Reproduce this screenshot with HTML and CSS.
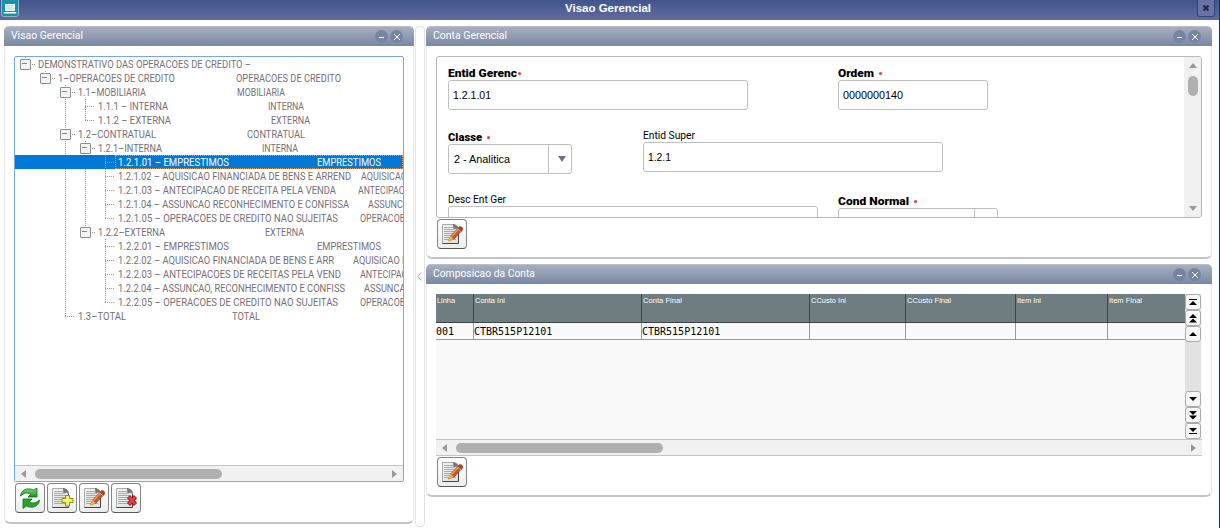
FILE: index.html
```html
<!DOCTYPE html>
<html lang="pt">
<head>
  <meta charset="UTF-8">
  <title>Visao Gerencial</title>
  <link rel="stylesheet" href="styles.css">
</head>
<body>
  <svg class="defs">
    <defs>
      <linearGradient id="verde" x1="0" y1="0" x2="0" y2="1">
        <stop offset="0" stop-color="#7fdc7c"/>
        <stop offset="1" stop-color="#16941c"/>
      </linearGradient>
      <linearGradient id="papel" x1="0" y1="0" x2="1" y2="1">
        <stop offset="0" stop-color="#f4f4f4"/>
        <stop offset="1" stop-color="#dedede"/>
      </linearGradient>
      <symbol id="folha" viewBox="0 0 30 30">
        <path d="M5.5 5.500h11l5 5v14h-16z" fill="url(#papel)" stroke="#aaa"/>
        <path d="M21.500 11v13.500h-16" fill="none" stroke="#444"/>
        <path d="M16 5c3 0 6 2.500 6 6l-3-1.500-2.500 1.500z" fill="#777"/>
        <path d="M7 8.500h9M7 10.500h9M7 12.500h12M7 14.500h12M7 16.500h12M7 18.500h12M7 20.500h12" stroke="#a9a9a9"/>
      </symbol>
      <symbol id="editar" viewBox="0 0 30 30">
        <use href="#folha"/>
        <path d="M11.500 22l2.200-5L21 9l3.500 3-7.500 8z" fill="#c9572b" stroke="#8a3a18" stroke-width=".6"/>
        <path d="M14.500 17.500l7.500-8" stroke="#ec9a6c" stroke-width="1.200"/>
        <path d="M11 22.500l2.400-5.500 3.300 2.900z" fill="#eeb44c"/>
        <path d="M20.500 9.500l1.500-2q2-1 3.500 1t-.2 3.200l-1.300 1.300z" fill="#a4452a"/>
        <path d="M20.500 9.500l3.600 3.400" stroke="#e0b060"/>
      </symbol>
    </defs>
  </svg>

  <div class="janela">
    <header class="titulo">
      <svg class="logo" width="19" height="17" viewBox="0 0 19 17">
        <rect x="1.500" y="-2" width="17" height="18.500" rx="2" fill="#1591ac" stroke="#8cb5c8"/>
        <rect x="5.500" y="4.500" width="9" height="6" fill="#c9e9f1" stroke="#fff"/>
        <path d="M4 12h12l.5 1.500h-13z" fill="#fff"/>
      </svg>
      <span data-w="86">Visao Gerencial</span>
      <button class="fechar"><svg width="8" height="8" viewBox="0 0 8 8"><path d="M1.500 1.500l5 5M6.500 1.500l-5 5" stroke="#262b45" stroke-width="2.200"/></svg></button>
    </header>

    <main class="conteudo">
      <section class="painel arvore-painel">
        <h2><span data-w="72">Visao Gerencial</span><i class="mini"></i><i class="mini x"></i></h2>
        <div class="lista">
          <div id="arvore"></div>
          <div class="rolagem-h">
            <i class="seta esq"></i><i class="barra"></i><i class="seta dir"></i>
          </div>
        </div>
        <div class="botoes">
          <button><svg viewBox="0 0 30 30">
            <path d="M5.500 13C6 7 12 4 18.500 7l3.500-2v9h-9l3-3c-4-1.800-7-1-10.500 2z" fill="url(#verde)" stroke="#176d20" stroke-width=".8"/>
            <path d="M24.500 17c-.5 6-6.500 9-13 6l-3.500 2.500V16h9l-3 3c4 1.800 7 1 10.500-2z" fill="#27a52b" stroke="#176d20" stroke-width=".8"/>
          </svg></button>
          <button><svg viewBox="0 0 30 30"><use href="#folha"/><path d="M18.500 12.500h4v3h3.500v4h-3.500v3.500h-4v-3.500H15v-4h3.500z" fill="#eef56a" stroke="#858c20"/></svg></button>
          <button><svg viewBox="0 0 30 30"><use href="#editar"/></svg></button>
          <button><svg viewBox="0 0 30 30"><use href="#folha"/><path d="M17.500 13.500l7 8M24.500 13.500l-7 8" stroke="#941c1c" stroke-width="4.200"/><path d="M18 14l6 7M24 14l-6 7" stroke="#ef3b3b" stroke-width="2.600"/></svg></button>
        </div>
      </section>

      <div class="divisor"><svg width="5" height="9" viewBox="0 0 5 9"><path d="M4.500 .5l-4 4 4 4" fill="none" stroke="#aaa"/></svg></div>

      <div class="direita">
        <section class="painel">
          <h2><span data-w="74">Conta Gerencial</span><i class="mini"></i><i class="mini x"></i></h2>
          <div class="form">
            <div class="campos">
              <div class="linha">
                <div class="campo w300">
                  <label><b data-w="69">Entid Gerenc</b><em></em></label>
                  <div class="entrada"><span data-w="38">1.2.1.01</span></div>
                </div>
                <div class="campo w150 ordem">
                  <label><b data-w="36">Ordem</b><em class="longe"></em></label>
                  <div class="entrada"><span data-w="60">0000000140</span></div>
                </div>
              </div>
              <div class="linha">
                <div class="campo w124 baixo">
                  <label><b data-w="34">Classe</b><em class="longe"></em></label>
                  <div class="entrada selecao"><span data-w="56">2 - Analitica</span><i></i></div>
                </div>
                <div class="campo w300 super">
                  <label><span data-w="52">Entid Super</span></label>
                  <div class="entrada"><span data-w="23">1.2.1</span></div>
                </div>
              </div>
              <div class="linha linha3">
                <div class="campo w370">
                  <label><span data-w="58">Desc Ent Ger</span></label>
                  <div class="entrada"></div>
                </div>
                <div class="campo w160 cond baixo">
                  <label><b data-w="71">Cond Normal</b><em class="longe"></em></label>
                  <div class="entrada selecao"><i></i></div>
                </div>
              </div>
            </div>
            <div class="rolagem-v"><i class="seta cima"></i><i class="barra"></i><i class="seta fundo"></i></div>
          </div>
          <div class="botoes">
            <button><svg viewBox="0 0 30 30"><use href="#editar"/></svg></button>
          </div>
        </section>

        <section class="painel">
          <h2><span data-w="102">Composicao da Conta</span><i class="mini"></i><i class="mini x"></i></h2>
          <div class="grade">
            <div class="grade-corpo">
              <div class="tabela">
                <div class="cab"><span data-w="18">Linha</span></div>
                <div class="cab"><span data-w="30">Conta Ini</span></div>
                <div class="cab"><span data-w="39">Conta Final</span></div>
                <div class="cab"><span data-w="35">CCusto Ini</span></div>
                <div class="cab"><span data-w="44">CCusto Final</span></div>
                <div class="cab"><span data-w="24">Item Ini</span></div>
                <div class="cab"><span data-w="33">Item Final</span></div>
                <div class="cel">001</div>
                <div class="cel">CTBR515P12101</div>
                <div class="cel">CTBR515P12101</div>
                <div class="cel"></div>
                <div class="cel"></div>
                <div class="cel"></div>
                <div class="cel"></div>
              </div>
              <div class="nav">
                <button><svg viewBox="0 0 16 16"><path d="M4 5.500h8" stroke="#000"/><path d="M4 11l4-4 4 4z"/></svg></button>
                <button><svg viewBox="0 0 16 16"><path d="M4 8l4-4 4 4zM4 12.500l4-4 4 4z"/></svg></button>
                <button><svg viewBox="0 0 16 16"><path d="M4 10l4-4 4 4z"/></svg></button>
                <span></span>
                <button><svg viewBox="0 0 16 16"><path d="M4 6h8l-4 4z"/></svg></button>
                <button><svg viewBox="0 0 16 16"><path d="M4 4h8l-4 4zM4 8.500h8l-4 4z"/></svg></button>
                <button><svg viewBox="0 0 16 16"><path d="M4 5h8l-4 4z"/><path d="M4 10.500h8" stroke="#000"/></svg></button>
              </div>
            </div>
            <div class="rolagem-h">
              <i class="seta esq"></i><i class="barra"></i><i class="seta dir"></i>
            </div>
          </div>
          <div class="botoes">
            <button><svg viewBox="0 0 30 30"><use href="#editar"/></svg></button>
          </div>
        </section>
      </div>
    </main>
  </div>

  <script src="script.js"></script>
</body>
</html>
```
FILE: styles.css
```css
* {
  box-sizing: border-box;
}

body {
  margin: 0;
  width: 1220px;
  height: 528px;
  overflow: hidden;
  background: #fff;
  font-family: Roboto, "Liberation Sans", sans-serif;
  font-size: 11px;
  color: #000;
}

.defs {
  position: absolute;
  width: 0;
  height: 0;
}

svg {
  display: block;
}

button {
  padding: 0;
  font: inherit;
}

[data-w] {
  display: inline-block;
  white-space: pre;
  transform-origin: 0 50%;
}

.janela {
  height: 528px;
  border-right: 1px solid #0b3a5b;
}

/* barra de titulo */
.titulo {
  display: flex;
  justify-content: space-between;
  height: 20px;
  background: linear-gradient(#41558d, #626b9f);
  color: #fff;
  font: bold 11px/16px "Liberation Sans", sans-serif;
}

.fechar {
  width: 18px;
  height: 17px;
  margin-right: 4px;
  display: flex;
  align-items: center;
  justify-content: center;
  background: #6873a6;
  border: 1px solid #2f4280;
  border-top: 0;
  border-radius: 0 0 3px 3px;
}

.conteudo {
  display: flex;
  height: 508px;
  padding: 6px 0 0 4px;
}

/* paineis */
.painel {
  width: 786px;
  height: 233px;
  background: #fff;
  border: 1px solid #e4e4e4;
  border-top: 0;
  border-bottom: 2px solid #c4c4c4;
  border-radius: 5px 5px 6px 6px;
  padding: 0 9px;
}

.painel h2 {
  display: flex;
  align-items: center;
  height: 20px;
  margin: 0 -10px 10px;
  padding: 0 10px 2px 7px;
  background: linear-gradient(#a7afbf, #7887a3);
  border-top: 1px solid #b9bec9;
  border-radius: 5px 5px 0 0;
  color: #fff;
  font-size: 11px;
  font-weight: normal;
}

.painel h2 .mini:first-of-type {
  margin-left: auto;
}

.mini {
  display: flex;
  align-items: center;
  justify-content: center;
  width: 13px;
  height: 13px;
  margin: 2px 1px 0;
  border-radius: 50%;
  background: #7585a1;
}

.mini::before {
  content: "";
  width: 5px;
  height: 1px;
  margin-top: 2px;
  background: #fff;
}

.mini.x::before {
  width: 6px;
  height: 6px;
  margin: 0;
  background: linear-gradient(45deg, transparent 43%, #fff 43% 57%, transparent 57%),
    linear-gradient(-45deg, transparent 43%, #fff 43% 57%, transparent 57%);
}

.arvore-painel {
  width: 410px;
  height: 498px;
}

.lista {
  width: 390px;
  height: 426px;
  border: 1px solid #77a5ef;
  border-radius: 2px;
  overflow: hidden;
  display: flex;
  flex-direction: column;
}

#arvore {
  flex: 1;
  overflow: hidden;
}

.no {
  display: flex;
  height: 14px;
  line-height: 14px;
  color: #766f77;
  white-space: pre;
}

.no .guia {
  flex: none;
  width: 20px;
  height: 14px;
}

.guia.v {
  background: repeating-linear-gradient(#999 0 1px, transparent 1px 2px) 10px 0 / 1px 14px no-repeat;
}

.guia.t {
  background: repeating-linear-gradient(#999 0 1px, transparent 1px 2px) 10px 0 / 1px 14px no-repeat,
    repeating-linear-gradient(90deg, #999 0 1px, transparent 1px 2px) 10px 7px / 9px 1px no-repeat;
}

.guia.l {
  background: repeating-linear-gradient(#999 0 1px, transparent 1px 2px) 10px 0 / 1px 8px no-repeat,
    repeating-linear-gradient(90deg, #999 0 1px, transparent 1px 2px) 10px 7px / 9px 1px no-repeat;
}

.guia.b,
.guia.u {
  padding: 2px 0 0 5px;
  background: repeating-linear-gradient(90deg, #999 0 1px, transparent 1px 2px) 15px 7px / 5px 1px no-repeat,
    repeating-linear-gradient(#999 0 1px, transparent 1px 2px) 10px 0 / 1px 14px no-repeat;
}

.guia.u {
  background-size: 5px 1px, 1px 4px;
}

.guia.b::before,
.guia.u::before {
  content: "";
  display: block;
  width: 9px;
  height: 9px;
  border: 1px solid #8e8e8e;
  border-radius: 1px;
  background: linear-gradient(#888, #888) 1px 3px / 5px 1px no-repeat #f3f3f3;
}

.no .texto {
  display: flex;
  flex: 1;
  padding: 1px 0 0 3px;
  min-width: 0;
  overflow: hidden;
}

.no .nome,
.no .desc {
  flex: none;
}

.no.ativo {
  background: #0078d7;
  color: #fff;
}

.no.ativo .guia.v {
  background: none;
}

.no.ativo .texto {
  outline: 1px dotted #e39a56;
  outline-offset: -1px;
}

/* rolagem */
.rolagem-h {
  display: flex;
  align-items: center;
  height: 17px;
  flex: none;
  padding: 0 6px;
  background: #f1f1f1;
  border-top: 1px solid #c4c4c4;
}

.lista .rolagem-h {
  height: 16px;
}

.rolagem-h .barra {
  width: 187px;
  height: 10px;
  margin-left: 9px;
  border-radius: 5px;
  background: #b0b0b0;
}

.seta {
  width: 0;
  height: 0;
  border: 4px solid transparent;
}

.seta.esq {
  border-right: 5px solid #999;
  border-left: 0;
}

.seta.dir {
  margin-left: auto;
  border-left: 5px solid #999;
  border-right: 0;
}

.seta.cima {
  border-bottom: 5px solid #999;
  border-top: 0;
}

.seta.fundo {
  margin-top: auto;
  border-top: 5px solid #999;
  border-bottom: 0;
}

.botoes {
  display: flex;
  gap: 2px;
  padding: 1px 0 0 1px;
}

.botoes button {
  width: 30px;
  height: 30px;
  border: 1px solid #858585;
  border-bottom-color: #555;
  border-radius: 4px;
  background: linear-gradient(#fff, #eceeee);
}

.botoes svg {
  width: 30px;
  height: 30px;
  margin: -1px;
}

.divisor {
  display: flex;
  align-items: center;
  width: 10px;
  height: 501px;
  margin: 0 1px;
  padding-left: 1px;
  border: 1px solid #e2e2e2;
  border-radius: 4px;
}

.direita {
  display: flex;
  flex-direction: column;
  gap: 5px;
}

/* formulario */
.form {
  display: flex;
  width: 766px;
  height: 162px;
  border: 1px solid #b8b8b8;
  border-radius: 3px;
  overflow: hidden;
}

.campos {
  flex: 1;
  padding: 9px 0 0 11px;
}

.linha {
  display: flex;
  height: 62px;
}

.linha3 {
  padding-top: 2px;
}

.campo label {
  display: flex;
  align-items: center;
  height: 14px;
}

.campo.baixo {
  padding-top: 2px;
}

.campo b {
  font-size: 11.5px;
  font-weight: 900;
}

.campo em {
  width: 3px;
  height: 3px;
  margin: 1px 0 0 1px;
  border-radius: 50%;
  background: #f33;
}

.campo em.longe {
  margin-left: 5px;
}

.entrada {
  display: flex;
  align-items: center;
  height: 30px;
  padding-left: 4px;
  border: 1px solid #bfbfbf;
  border-radius: 3px;
  font: 11px "Liberation Sans", sans-serif;
}

.selecao {
  padding-left: 5px;
}

.selecao i {
  display: flex;
  align-items: center;
  width: 23px;
  height: 28px;
  margin-left: auto;
  padding-left: 9px;
  border-left: 1px solid #bfbfbf;
}

.selecao i::after {
  content: "";
  border: 4px solid transparent;
  border-top: 6px solid #6b7184;
  border-bottom: 0;
}

.w124 { width: 124px; }
.w150 { width: 150px; }
.w160 { width: 160px; }
.w300 { width: 300px; }
.w370 { width: 370px; }

.ordem { margin-left: 90px; }
.super { margin-left: 71px; }
.cond { margin-left: 20px; }

.rolagem-v {
  display: flex;
  flex-direction: column;
  align-items: center;
  width: 17px;
  padding: 6px 0;
  background: #f1f1f1;
}

.rolagem-v .barra {
  width: 10px;
  height: 20px;
  margin-top: 8px;
  border-radius: 5px;
  background: #b0b0b0;
}

/* grade */
.grade {
  width: 766px;
  height: 162px;
  background: #f9f9f9;
}

.grade-corpo {
  display: flex;
  height: 145px;
}

.tabela {
  display: grid;
  grid-template-columns: 38px 168px 168px 96px 110px 92px 77px;
  grid-template-rows: 29px 17px;
}

.cab {
  padding: 2px 0 0 1px;
  background: #6e7d80;
  border-right: 1px solid #3e4648;
  border-bottom: 1px solid #3e4648;
  color: #fff;
  font: 8px/9px "Liberation Sans", sans-serif;
}

.cel {
  height: 17px;
  border-right: 1px solid #999;
  border-bottom: 1px solid #999;
  font: 10px/18px "DejaVu Sans Mono", monospace;
}

.cab:nth-child(7),
.cel:last-child {
  border-right: 0;
}

.nav {
  display: flex;
  flex-direction: column;
  width: 16px;
  margin-right: 1px;
  background: #e2e2e2;
}

.nav span {
  flex: 1;
}

.nav button {
  width: 16px;
  height: 16px;
  border: 1px solid #aaa;
  border-radius: 3px;
  background: #f8f8f8;
}

.nav svg {
  width: 16px;
  height: 16px;
  margin: -1px;
}

.grade .rolagem-h {
  border-bottom: 1px solid #c4c4c4;
}

.grade .rolagem-h .barra {
  width: 207px;
}
```
FILE: script.js
```js
// guias: v = vertical, t = ramo, l = ultimo ramo, b = no aberto, u = ultimo no aberto, . = vazio
// [guias, nome, largura, descricao, inicio, largura]
const nos = [
  ["u", "DEMONSTRATIVO DAS OPERACOES DE CREDITO –", 213],
  [".u", "1–OPERACOES DE CREDITO", 117, "OPERACOES DE CREDITO", 236, 105],
  ["..b", "1.1–MOBILIARIA", 68, "MOBILIARIA", 237, 48],
  ["..vt", "1.1.1 – INTERNA", 70, "INTERNA", 268, 36],
  ["..vl", "1.1.2 – EXTERNA", 73, "EXTERNA", 271, 39],
  ["..b", "1.2–CONTRATUAL", 78, "CONTRATUAL", 247, 58],
  ["..vb", "1.2.1–INTERNA", 64, "INTERNA", 262, 36],
  ["..vvt", "1.2.1.01 – EMPRESTIMOS", 111, "EMPRESTIMOS", 317, 64],
  ["..vvt", "1.2.1.02 – AQUISICAO FINANCIADA DE BENS E ARREND", 233, "AQUISICAO", 361, 46],
  ["..vvt", "1.2.1.03 – ANTECIPACAO DE RECEITA PELA VENDA", 218, "ANTECIPACAO", 358, 58],
  ["..vvt", "1.2.1.04 – ASSUNCAO RECONHECIMENTO E CONFISSA", 231, "ASSUNCAO", 368, 47],
  ["..vvl", "1.2.1.05 – OPERACOES DE CREDITO NAO SUJEITAS", 220, "OPERACOES", 360, 50],
  ["..vu", "1.2.2–EXTERNA", 67, "EXTERNA", 265, 39],
  ["..v.t", "1.2.2.01 – EMPRESTIMOS", 111, "EMPRESTIMOS", 317, 64],
  ["..v.t", "1.2.2.02 – AQUISICAO FINANCIADA DE BENS E ARR", 216, "AQUISICAO F", 353, 54],
  ["..v.t", "1.2.2.03 – ANTECIPACOES DE RECEITAS PELA VEND", 223, "ANTECIPACOES", 360, 64],
  ["..v.t", "1.2.2.04 – ASSUNCAO, RECONHECIMENTO E CONFISS", 227, "ASSUNCAO,", 364, 49],
  ["..v.l", "1.2.2.05 – OPERACOES DE CREDITO NAO SUJEITAS", 220, "OPERACOES", 360, 50],
  ["..l", "1.3–TOTAL", 48, "TOTAL", 232, 28]
];

const arvore = document.getElementById("arvore");

nos.forEach(([guias, nome, largura, desc, inicio, larguraDesc], i) => {
  const texto = 18 + guias.length * 20;
  let html = [...guias].map(g => `<i class="guia ${g}"></i>`).join("");
  html += `<div class="texto"><span class="nome" style="width:${(inicio || texto + largura) - texto}px"><span data-w="${largura}">${nome}</span></span>`;
  if (desc) html += `<span class="desc" data-w="${larguraDesc}">${desc}</span>`;
  arvore.innerHTML += `<div class="no${i === 7 ? " ativo" : ""}">${html}</div></div>`;
});

// condensa cada texto para a sua largura
document.querySelectorAll("[data-w]").forEach(el => {
  const range = document.createRange();
  range.selectNodeContents(el);
  const atual = range.getBoundingClientRect().width;
  el.style.transform = `scaleX(${el.dataset.w / atual})`;
  el.style.marginRight = el.dataset.w - atual + "px";
});
```
